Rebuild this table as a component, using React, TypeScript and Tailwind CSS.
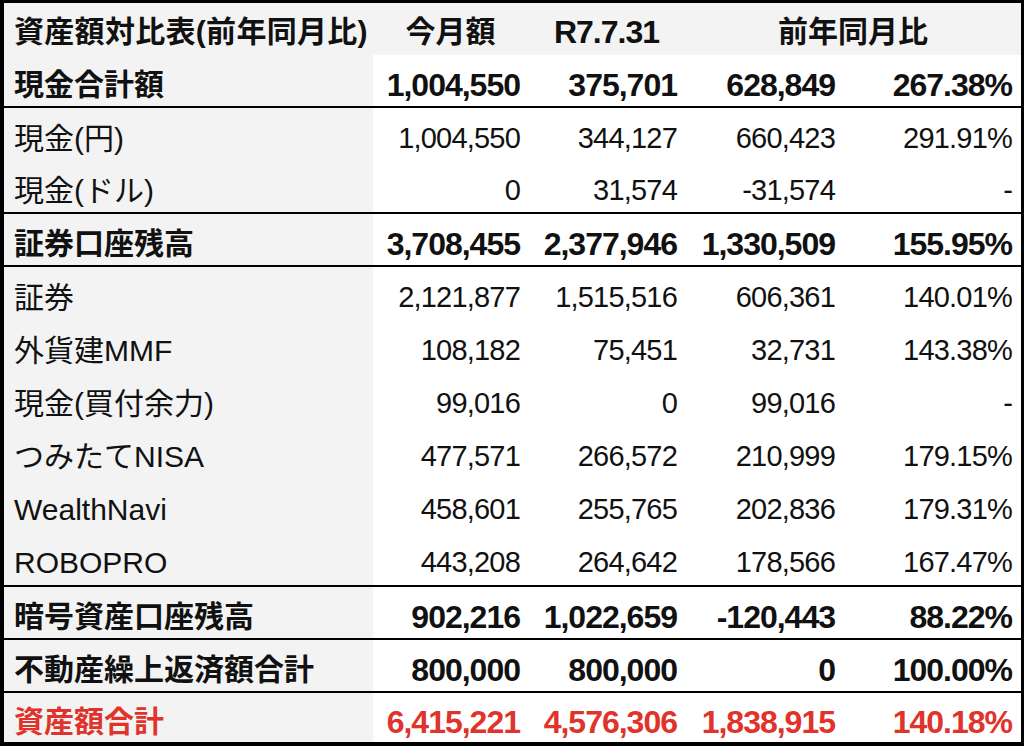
import React from "react";

type Row = {
  label: string;
  v: [string, string, string, string];
  bold?: boolean;
  red?: boolean;
  h: string;
  border?: boolean;
};

const rows: Row[] = [
  { label: "現金合計額", v: ["1,004,550", "375,701", "628,849", "267.38%"], bold: true, h: "h-[53px]", border: true },
  { label: "現金(円)", v: ["1,004,550", "344,127", "660,423", "291.91%"], h: "h-[52px]" },
  { label: "現金(ドル)", v: ["0", "31,574", "-31,574", "-"], h: "h-[54px]", border: true },
  { label: "証券口座残高", v: ["3,708,455", "2,377,946", "1,330,509", "155.95%"], bold: true, h: "h-[53px]", border: true },
  { label: "証券", v: ["2,121,877", "1,515,516", "606,361", "140.01%"], h: "h-[53px]" },
  { label: "外貨建MMF", v: ["108,182", "75,451", "32,731", "143.38%"], h: "h-[53px]" },
  { label: "現金(買付余力)", v: ["99,016", "0", "99,016", "-"], h: "h-[53px]" },
  { label: "つみたてNISA", v: ["477,571", "266,572", "210,999", "179.15%"], h: "h-[53px]" },
  { label: "WealthNavi", v: ["458,601", "255,765", "202,836", "179.31%"], h: "h-[53px]" },
  { label: "ROBOPRO", v: ["443,208", "264,642", "178,566", "167.47%"], h: "h-[55px]", border: true },
  { label: "暗号資産口座残高", v: ["902,216", "1,022,659", "-120,443", "88.22%"], bold: true, h: "h-[53px]", border: true },
  { label: "不動産繰上返済額合計", v: ["800,000", "800,000", "0", "100.00%"], bold: true, h: "h-[53px]", border: true },
  { label: "資産額合計", v: ["6,415,221", "4,576,306", "1,838,915", "140.18%"], bold: true, red: true, h: "h-[49px]" },
];

const font = { fontFamily: '"Liberation Sans", "Noto Sans CJK JP", sans-serif' };

export default function App() {
  return (
    <div
      className="w-[1024px] h-[746px] bg-black pt-[3px] pl-[4px] pr-[3px] pb-[4px] overflow-hidden"
      style={font}
    >
      <div className="w-full h-full bg-white flex flex-col text-[#111]">
        <div className="grid grid-cols-[369px_155px_157px_336px] h-[52px] bg-[#f3f3f3] items-center pt-[6px] font-bold text-[30px] leading-none">
          <div className="pl-[10px] whitespace-nowrap tracking-[0.3px]">資産額対比表(前年同月比)</div>
          <div className="text-center">今月額</div>
          <div className="text-center text-[32px] tracking-[-1px]">R7.7.31</div>
          <div className="text-center">前年同月比</div>
        </div>
        {rows.map((r, i) => (
          <div
            key={i}
            className={`grid grid-cols-[369px_155px_157px_158px_178px] ${r.h} ${r.border ? "border-b-2 border-black" : ""} ${r.red ? "text-[#e0332b]" : ""}`}
          >
            <div
              className={`bg-[#f3f3f3] pl-[10px] flex items-center pt-[9px] whitespace-nowrap text-[30px] leading-none ${r.bold ? "font-bold" : ""}`}
            >
              {r.label}
            </div>
            {r.v.map((x, j) => (
              <div
                key={j}
                className={`flex items-center justify-end pt-[8px] leading-none ${j === 3 ? "pr-[9px]" : "pr-[8px]"} ${r.bold ? "font-bold text-[32px] tracking-[-1px]" : "text-[29px] tracking-[-0.8px]"}`}
              >
                {x}
              </div>
            ))}
          </div>
        ))}
      </div>
    </div>
  );
}
